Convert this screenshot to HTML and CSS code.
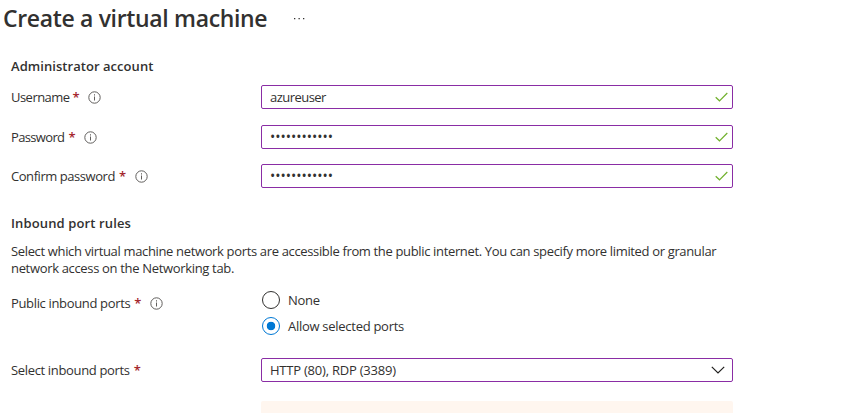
FILE: index.html
```html
<!DOCTYPE html>
<html lang="en">
<head>
<meta charset="utf-8">
<title>Create a virtual machine</title>
<link rel="stylesheet" href="styles.css">
</head>
<body>
<header class="page-header">
  <h1>Create a virtual machine</h1>
  <svg class="more" width="12" height="4" viewBox="0 0 12 4"><path d="M1 1h1.3v1.3H1zM5.5 1h1.3v1.3H5.5zM10 1h1.3v1.3H10z"/></svg>
</header>
<main class="form">
  <svg class="defs" width="0" height="0" aria-hidden="true">
    <symbol id="info" viewBox="0 0 13 13"><circle cx="6.5" cy="6.5" r="5.7" fill="none" stroke="#605e5c" stroke-width="1"/><path d="M6 5.5h1v4H6zM6 3.3h1v1.2H6z" fill="#605e5c"/></symbol>
    <symbol id="check" viewBox="0 0 13 10"><path d="M.7 5.2 4.5 8.8 12.3 1" fill="none" stroke="#70b02c" stroke-width="1.2"/></symbol>
  </svg>
  <h2>Administrator account</h2>
  <div class="row username">
    <div class="label"><span class="t-username">Username</span><b>*</b><svg class="info"><use href="#info"/></svg></div>
    <div class="field"><span class="t-user">azureuser</span><svg class="check"><use href="#check"/></svg></div>
  </div>
  <div class="row password">
    <div class="label"><span class="t-password">Password</span><b>*</b><svg class="info"><use href="#info"/></svg></div>
    <div class="field"><span class="dots">••••••••••••</span><svg class="check"><use href="#check"/></svg></div>
  </div>
  <div class="row confirm">
    <div class="label"><span class="t-confirm">Confirm password</span><b>*</b><svg class="info"><use href="#info"/></svg></div>
    <div class="field"><span class="dots">••••••••••••</span><svg class="check"><use href="#check"/></svg></div>
  </div>
  <h2 class="rules">Inbound port rules</h2>
  <p><span class="line-one">Select which virtual machine network ports are accessible from the public internet. You can specify more limited or granular</span><br><span class="line-two">network access on the Networking tab.</span></p>
  <div class="row ports">
    <div class="label"><span class="t-public">Public inbound ports</span><b>*</b><svg class="info"><use href="#info"/></svg></div>
    <div class="radios">
      <div class="radio"><i></i><span class="t-none">None</span></div>
      <div class="radio selected"><i></i><span class="t-allow">Allow selected ports</span></div>
    </div>
  </div>
  <div class="row select">
    <div class="label"><span class="t-select">Select inbound ports</span><b>*</b></div>
    <div class="field"><span class="t-http">HTTP (80), RDP (3389)</span><svg class="chevron" viewBox="0 0 14 8"><path d="M.8.8 7 7 13.2.8" fill="none" stroke="#201f1e" stroke-width="1.2"/></svg></div>
  </div>
  <div class="notice"></div>
</main>
</body>
</html>
```

FILE: styles.css
```css
* { box-sizing: border-box; }
body {
  margin: 0;
  height: 413px;
  overflow: hidden;
  background: #fff;
  color: #323130;
  font: 13px/17px "Open Sans", "Noto Sans", sans-serif;
  white-space: nowrap;
}
h1, h2, p { margin: 0; }
.page-header { display: flex; align-items: center; height: 38px; padding-left: 3px; }
h1 { width: 290px; padding-bottom: 1px; font-size: 23px; line-height: 31px; font-weight: 600; letter-spacing: -0.34px; }
.more { fill: #323130; }
.form { padding: 20px 0 0 11px; width: 733px; }
.defs { display: block; }
h2 { font-size: 13px; line-height: 17px; font-weight: 600; letter-spacing: 0.05px; }
.row { display: grid; grid-template-columns: 250px 472px; }
.label { display: flex; align-items: center; height: 24px; }
.label b { margin-left: 4px; color: #a4262c; font-weight: 600; }
.info { width: 13px; height: 13px; margin-left: 8.5px; }
.field {
  display: flex;
  align-items: center;
  justify-content: space-between;
  height: 24px;
  padding: 0 4px 0 8px;
  border: 1px solid #8a2da5;
  border-radius: 2px;
}
.check { width: 13px; height: 10px; }
.chevron { width: 14px; height: 8px; margin-right: 3px; }
.username { margin-top: 10px; }
.password { margin-top: 16px; }
.confirm { margin-top: 15px; }
.rules { margin-top: 27px; letter-spacing: 0.13px; }
p { margin-top: 11px; }
.ports { margin-top: 14px; }
.radios { display: flex; flex-direction: column; gap: 8px; padding-left: 1px; }
.radio { display: flex; align-items: center; height: 18px; gap: 8px; }
.radio i { width: 18px; height: 18px; border: 1px solid #323130; border-radius: 50%; }
.selected i { border-color: #0078d4; background: radial-gradient(circle, #0078d4 4px, transparent 4.6px); }
.select { margin-top: 23px; }
.notice { height: 12px; margin: 19px 0 0 250px; border-radius: 2px 2px 0 0; background: #fff6ef; }

.t-username { margin-right: -1px; letter-spacing: -0.53px; }
.t-password { letter-spacing: -0.65px; }
.t-user { letter-spacing: -0.54px; }
.t-confirm { letter-spacing: -0.45px; }
.dots { padding-bottom: 2px; font-size: 14px; letter-spacing: -0.02px; }
.line-one { letter-spacing: -0.347px; }
.line-two { letter-spacing: -0.33px; }
.t-public, .t-select { letter-spacing: -0.34px; }
.t-none, .t-allow { letter-spacing: -0.28px; }
.t-http { letter-spacing: -0.22px; }
```
